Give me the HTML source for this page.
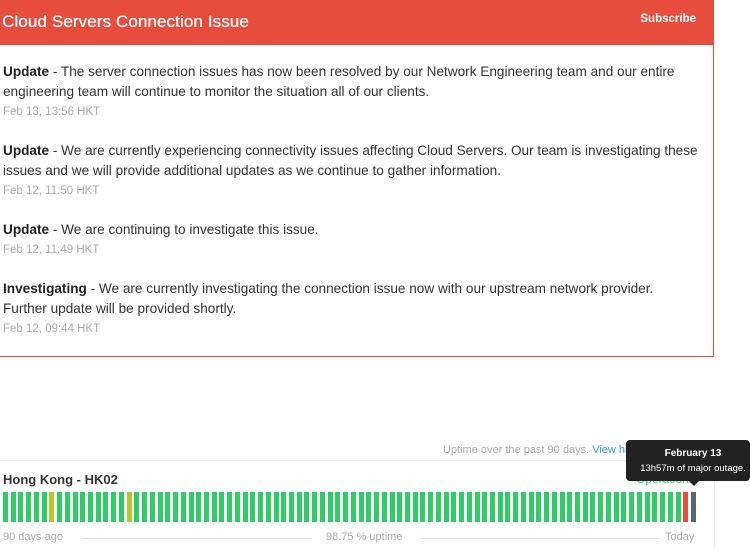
<!DOCTYPE html><html><head><style>
body{margin:0;width:750px;height:549px;overflow:hidden;background:#fff;font-family:"Liberation Sans",sans-serif;color:#333;position:relative}
.card{position:absolute;left:-1px;top:0;width:715px;height:357px;border:1px solid #e74c3c;border-top:none;box-sizing:border-box}
.hd{height:45px;background:#e74c3c;color:#fff;position:relative}
.hd h1{margin:0;position:absolute;left:2px;top:12px;font-size:17px;font-weight:normal;letter-spacing:0.1px;text-shadow:0.3px 0 0 #fff}
.hd span{position:absolute;right:17px;top:13px;font-size:11.5px;font-weight:bold}
.u{position:absolute;left:3px;font-size:13.6px;line-height:20px;width:700px;color:#333}
.u b{color:#222}
.d{font-size:11.5px;color:#aaa;line-height:14px;margin-top:3px}
.bar{position:absolute;top:492px;width:5px;height:30px;background:#2fcc66}
.sm{position:absolute;font-size:11px;color:#aaa}
</style></head><body>
<div class="card"><div class="hd"><h1>Cloud Servers Connection Issue</h1><span>Subscribe</span></div></div>
<div class="u" style="top:62px"><b>Update</b> - The server connection issues has now been resolved by our Network Engineering team and our entire engineering team will continue to monitor the situation all of our clients.<div class="d">Feb 13, 13:56 HKT</div></div>
<div class="u" style="top:141px"><b>Update</b> - We are currently experiencing connectivity issues affecting Cloud Servers. Our team is investigating these issues and we will provide additional updates as we continue to gather information.<div class="d">Feb 12, 11:50 HKT</div></div>
<div class="u" style="top:220px"><b>Update</b> - We are continuing to investigate this issue.<div class="d">Feb 12, 11:49 HKT</div></div>
<div class="u" style="top:279px;width:680px"><b>Investigating</b> - We are currently investigating the connection issue now with our upstream network provider. Further update will be provided shortly.<div class="d">Feb 12, 09:44 HKT</div></div>
<div class="sm" style="left:443px;top:444px;font-size:11px">Uptime over the past 90 days. <span style="color:#3498db">View historical uptime.</span></div>
<div style="position:absolute;left:0;top:460px;width:715px;border-top:1px solid #eee"></div>
<div style="position:absolute;left:714px;top:460px;height:89px;border-left:1px solid #eee"></div>
<div style="position:absolute;left:3px;top:472px;font-size:13px;font-weight:bold;color:#333">Hong Kong - HK02</div>
<div class="sm" style="left:636px;top:472px;color:#2fcc66;font-size:12px">Operational</div>
<div id="bars"></div>
<div class="sm" style="left:3px;top:531px">90 days ago</div>
<div style="position:absolute;left:82px;top:538px;width:230px;border-top:1px solid #e5e5e5"></div>
<div class="sm" style="left:326px;top:531px">98.75 % uptime</div>
<div style="position:absolute;left:420px;top:538px;width:240px;border-top:1px solid #e5e5e5"></div>
<div class="sm" style="left:665px;top:531px">Today</div>
<div style="position:absolute;left:626px;top:440px;width:124px;height:41px;background:#222;border-radius:4px;color:#fff;text-align:center">
<div style="font-size:10px;font-weight:bold;margin-top:8px;margin-left:10px">February 13</div>
<div style="font-size:9.5px;margin-top:4px;margin-left:10px">13h57m of major outage.</div></div>
<div style="position:absolute;left:689px;top:481px;width:0;height:0;border-left:5px solid transparent;border-right:5px solid transparent;border-top:5px solid #222"></div>
<script>
var h='';for(var i=0;i<90;i++){var x=Math.round(3+i*7.73);var c='#2fcc66';if(i==6||i==16)c='#b8c728';if(i==88)c='#e74c3c';if(i==89)c='#5b6578';h+='<div class="bar" style="left:'+x+'px;background:'+c+'"></div>';}
document.getElementById('bars').innerHTML=h;
</script>
</body></html>
